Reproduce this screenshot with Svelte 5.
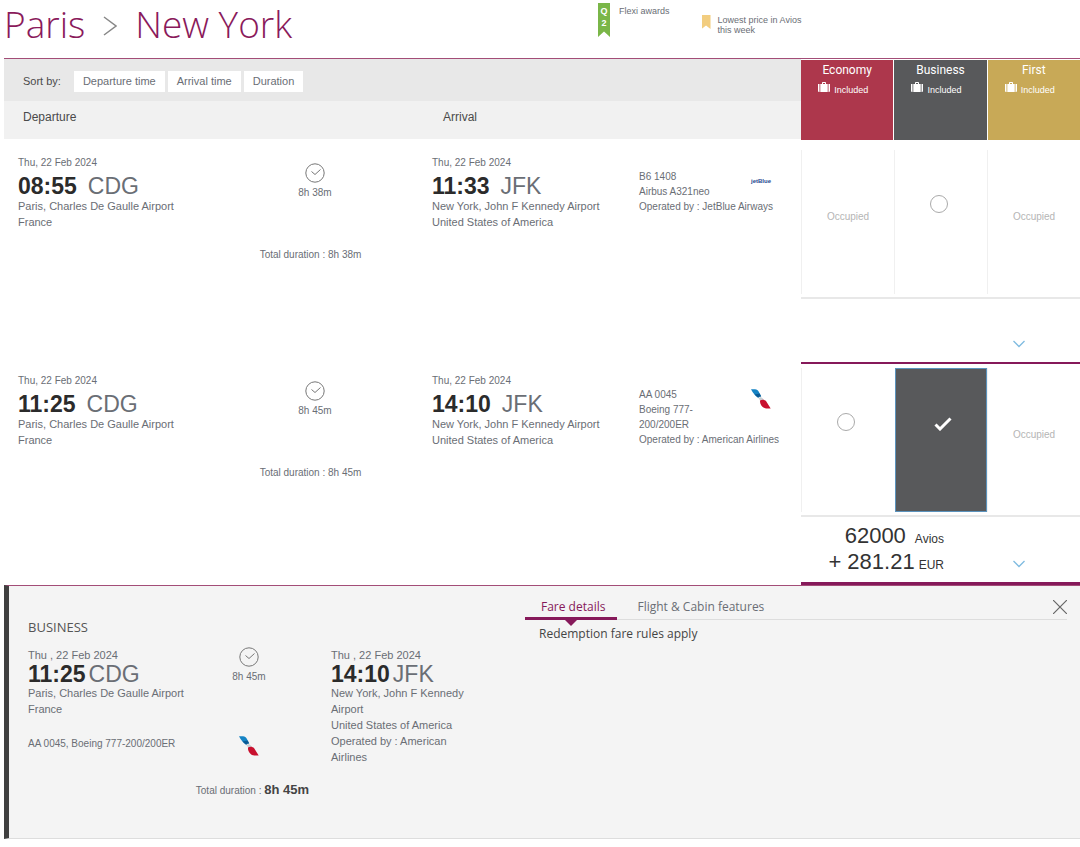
<script lang="ts">
  type Cabin = 'economy' | 'business' | 'first'

  type Flight = {
    id: string
    depart: string
    arrive: string
    duration: string
    number: string
    aircraft: string
    operator: string
    airline: 'jetblue' | 'american'
    open: Cabin[]
  }

  const cabins: { id: Cabin, label: string }[] = [
    { id: 'economy', label: 'Economy' },
    { id: 'business', label: 'Business' },
    { id: 'first', label: 'First' },
  ]

  const sorts = ['Departure time', 'Arrival time', 'Duration']
  const tabs = ['Fare details', 'Flight & Cabin features']

  const flights: Flight[] = [
    {
      id: 'b6-1408',
      depart: '08:55',
      arrive: '11:33',
      duration: '8h 38m',
      number: 'B6 1408',
      aircraft: 'Airbus A321neo',
      operator: 'JetBlue Airways',
      airline: 'jetblue',
      open: ['business'],
    },
    {
      id: 'aa-0045',
      depart: '11:25',
      arrive: '14:10',
      duration: '8h 45m',
      number: 'AA 0045',
      aircraft: 'Boeing 777-200/200ER',
      operator: 'American Airlines',
      airline: 'american',
      open: ['economy', 'business'],
    },
  ]

  let selected = $state('aa-0045/business')
  let activeTab = $state(0)
  let detailsOpen = $state(true)
</script>

{#snippet clock()}
  <svg class="clock" viewBox="0 0 20 20" width="20" height="20" aria-hidden="true">
    <circle cx="10" cy="10" r="9.200" />
    <path d="M6.500 8.500l3.500 3 5.500-5" />
  </svg>
{/snippet}

{#snippet american()}
  <svg viewBox="0 0 20 20" width="20" height="20" role="img" aria-label="American Airlines">
    <path fill="#1583c4" d="M0 .3h4c1.800 0 3 .9 3.800 2.500l2.400 4.700c-1.300-.4-2.400.2-3 1.300C4.300 7 2 4 0 .3z" />
    <path fill="#0b5a94" d="M3.500 5.600l5.200-1.100 1.500 3c-1.300-.4-2.400.2-3 1.300z" />
    <path fill="#c9ced2" d="M7.400 9c1-1.300 3.200-1.100 4.400.6l1 1.300-3.700.6z" />
    <path fill="#c8102e" d="M9 11.600c1.900-1.500 4.800-1.200 6 .5l4.700 7.400h-4.400c-3.200 0-6.700-3.700-6.300-7.900z" />
  </svg>
{/snippet}

{#snippet chevron()}
  <svg viewBox="0 0 12 8" width="12" height="8" aria-hidden="true">
    <path d="M.5 1l5.500 5.500L11.500 1" fill="none" stroke="#7fbbe0" stroke-width="1.300" />
  </svg>
{/snippet}

<main>
  <header>
    <h1>Paris <svg class="arrow" viewBox="0 0 14 20" width="14" height="20" role="img" aria-label="to"><path d="M1 1l12 9L1 19" /></svg> New York</h1>
    <div class="legend">
      <div class="flexi">
        <span class="ribbon"><b>Q</b><b>2</b></span>
        <span>Flexi awards</span>
      </div>
      <div class="lowest">
        <span class="tag"></span>
        <span>Lowest price in Avios<br />this week</span>
      </div>
    </div>
  </header>

  <section class="heading">
    <div class="bars">
      <div class="sort">
        <span>Sort by:</span>
        <div class="sort-buttons">
          {#each sorts as sort}
            <button type="button">{sort}</button>
          {/each}
        </div>
      </div>
      <div class="labels">
        <span>Departure</span>
        <span>Arrival</span>
      </div>
    </div>
    <div class="cabin-heads">
      {#each cabins as cabin}
        <div class="cabin-head {cabin.id}">
          <strong>{cabin.label}</strong>
          <span>
            <svg viewBox="0 0 12 10" width="12" height="10" fill="#fff" aria-hidden="true">
              <path d="M0 2h1.500v8H1Q0 10 0 9zM10.500 2H12v7q0 1-1 1h-.5z" />
              <path d="M2.300 2H4V.8Q4 0 4.800 0h2.400Q8 0 8 .8V2h1.700v8H2.300zM5 1v1h2V1z" fill-rule="evenodd" />
            </svg>
            Included
          </span>
        </div>
      {/each}
    </div>
  </section>

  {#each flights as flight}
    {@const active = selected.startsWith(flight.id)}
    <article class="flight">
      <div class="journey">
        <div>
          <p class="date">Thu, 22 Feb 2024</p>
          <p class="time"><b>{flight.depart}</b><span>CDG</span></p>
          <p>Paris, Charles De Gaulle Airport</p>
          <p>France</p>
        </div>
        <div class="length">
          {@render clock()}
          <span>{flight.duration}</span>
          <span class="total">Total duration : {flight.duration}</span>
        </div>
        <div>
          <p class="date">Thu, 22 Feb 2024</p>
          <p class="time"><b>{flight.arrive}</b><span>JFK</span></p>
          <p>New York, John F Kennedy Airport</p>
          <p>United States of America</p>
        </div>
        <div class="plane">
          <div class="plane-top">
            <div>
              <p>{flight.number}</p>
              <p>{flight.aircraft}</p>
            </div>
            {#if flight.airline === 'jetblue'}
              <span class="jetblue">jetBlue</span>
            {:else}
              <div class="tail">{@render american()}</div>
            {/if}
          </div>
          <p>Operated by : {flight.operator}</p>
        </div>
      </div>

      <div class="fares" class:active>
        <div class="cells">
          {#each cabins as cabin}
            {@const value = `${flight.id}/${cabin.id}`}
            {#if flight.open.includes(cabin.id)}
              <label class="cell" class:chosen={selected === value}>
                <input type="radio" name="fare" {value} bind:group={selected} aria-label="{flight.number} {cabin.label}" />
                {#if selected === value}
                  <svg viewBox="0 0 18 14" width="18" height="14" aria-hidden="true">
                    <path d="M1.500 7.500l4.500 4.500L16.500 1.500" fill="none" stroke="#fff" stroke-width="3" />
                  </svg>
                {/if}
              </label>
            {:else}
              <div class="cell occupied">Occupied</div>
            {/if}
          {/each}
        </div>
        <div class="price">
          <div class="amount">
            {#if active}
              <p>62000 <small class="avios">Avios</small></p>
              <p>+ 281.21 <small>EUR</small></p>
            {/if}
          </div>
          <button type="button" class="more" aria-label="Show fare details" onclick={() => detailsOpen = true}>
            {@render chevron()}
          </button>
        </div>
      </div>
    </article>
  {/each}

  {#if detailsOpen}
    <section class="details">
      <div class="summary">
        <h2>BUSINESS</h2>
        <div class="trip">
          <div>
            <p>Thu , 22 Feb 2024</p>
            <p class="time"><b>11:25</b><span>CDG</span></p>
            <p>Paris, Charles De Gaulle Airport</p>
            <p>France</p>
            <p class="aircraft">AA 0045, Boeing 777-200/200ER</p>
          </div>
          <div class="length">
            {@render clock()}
            <span>8h 45m</span>
            <div class="logo">{@render american()}</div>
          </div>
          <div class="arrival">
            <p>Thu , 22 Feb 2024</p>
            <p class="time"><b>14:10</b><span>JFK</span></p>
            <p>New York, John F Kennedy Airport</p>
            <p>United States of America</p>
            <p>Operated by : American Airlines</p>
          </div>
          <p class="sum">Total duration : <b>8h 45m</b></p>
        </div>
      </div>

      <div class="info">
        <div class="tabs">
          <div class="tab-list" role="tablist">
            {#each tabs as tab, i}
              <button type="button" role="tab" aria-selected={activeTab === i} onclick={() => activeTab = i}>{tab}</button>
            {/each}
          </div>
          <button type="button" class="close" aria-label="Close" onclick={() => detailsOpen = false}>
            <svg viewBox="0 0 14 14" width="14" height="14" aria-hidden="true">
              <path d="M0 0l14 14M14 0L0 14" stroke="#666" stroke-width="1.200" />
            </svg>
          </button>
        </div>
        <p class="rules">Redemption fare rules apply</p>
      </div>
    </section>
  {/if}
</main>

<style>
  :global(body) {
    background: #fff;
  }

  main {
    padding-left: 4px;
    font-family: 'Liberation Sans', Arial, sans-serif;
    font-size: 11px;
    line-height: 16px;
    color: #6a6e75;
  }

  h1, h2, p {
    margin: 0;
    font-weight: normal;
  }

  button {
    padding: 0;
    border: 0;
    background: none;
    font: inherit;
    color: inherit;
    cursor: pointer;
  }

  svg {
    display: block;
  }

  header {
    display: grid;
    grid-template-columns: 594fr 482fr;
    height: 58px;
    border-bottom: 1px solid #a34d77;
  }

  h1 {
    display: flex;
    align-items: center;
    gap: 18px;
    height: 48px;
    font: 300 37px/48px 'Open Sans', sans-serif;
    color: #8a1a5b;
  }

  .arrow {
    margin-top: 4px;
    fill: none;
    stroke: #888;
    stroke-width: 1.5;
  }

  .legend {
    display: flex;
    gap: 32px;
    padding-top: 3px;
    font-size: 9px;
    line-height: 10px;
  }

  .flexi, .lowest {
    display: flex;
    align-items: flex-start;
  }

  .flexi {
    gap: 9px;
    line-height: 16px;
  }

  .lowest {
    gap: 7px;
    padding-top: 12px;
  }

  .ribbon {
    display: flex;
    flex-direction: column;
    align-items: center;
    width: 12px;
    height: 34px;
    padding-top: 2px;
    box-sizing: border-box;
    background: #7ab648;
    clip-path: polygon(0 0, 100% 0, 100% 100%, 50% 84%, 0 100%);
    color: #fff;
    line-height: 12px;
  }

  .tag {
    width: 9px;
    height: 14px;
    background: #f2cd7f;
    clip-path: polygon(0 0, 100% 0, 100% 100%, 50% 75%, 0 100%);
  }

  .heading, .flight {
    display: grid;
    grid-template-columns: minmax(0, 797fr) minmax(0, 279fr);
  }

  .heading {
    margin-bottom: 4px;
  }

  .sort {
    display: flex;
    align-items: center;
    gap: 13px;
    height: 42px;
    padding: 2px 0 0 19px;
    box-sizing: border-box;
    background: #e8e8e8;
    color: #4a4a4a;
  }

  .sort-buttons {
    display: flex;
    gap: 3px;
  }

  .sort button {
    height: 21px;
    padding: 0 9px;
    background: #fff;
    color: #6a6e75;
  }

  .labels {
    display: grid;
    grid-template-columns: 420fr 358fr;
    padding: 8px 0 14px 19px;
    background: #f1f1f1;
    font-size: 12px;
    color: #4a4a4a;
  }

  .cabin-heads {
    display: grid;
    grid-template-columns: repeat(3, 1fr);
    gap: 1px;
    padding-top: 1px;
  }

  .cabin-head {
    display: flex;
    flex-direction: column;
    align-items: center;
    height: 80px;
    color: #fff;
  }

  .cabin-head strong {
    font: 12px/20px Roboto, sans-serif;
  }

  .cabin-head span {
    display: flex;
    gap: 4px;
    padding: 2px 8px 0 0;
    font-size: 9px;
  }

  .economy {
    background: #ad374c;
  }

  .business {
    background: #58595b;
  }

  .first {
    background: #c8a957;
  }

  .journey {
    display: grid;
    grid-template-columns: 180fr 234fr 207fr 162fr;
    padding: 11px 0 0 14px;
  }

  .journey p {
    white-space: nowrap;
  }

  .date, .length {
    font-size: 10px;
  }

  .time {
    display: flex;
    gap: 11px;
    font-size: 23px;
    line-height: 24px;
  }

  .flight .time {
    margin-top: 3px;
  }

  .time b {
    color: #2b2b2b;
  }

  .length {
    display: flex;
    flex-direction: column;
    align-items: center;
  }

  .clock {
    margin-bottom: 2px;
    fill: none;
    stroke: #777;
  }

  .journey .length {
    padding-top: 8px;
  }

  .total {
    margin-top: 46px;
    padding-right: 9px;
  }

  .plane {
    padding-top: 14px;
    font-size: 10px;
    line-height: 15px;
  }

  .plane-top {
    display: grid;
    grid-template-columns: 80px 1fr;
    gap: 32px;
  }

  .plane-top p {
    white-space: normal;
  }

  .jetblue {
    font-size: 6px;
    font-weight: bold;
    line-height: 24px;
    color: #24488f;
  }

  .tail {
    padding-top: 2px;
  }

  .fares {
    border-top: 2px solid transparent;
  }

  .fares.active {
    border-top-color: #86195a;
    border-bottom: 3px solid #86195a;
  }

  .cells {
    display: grid;
    grid-template-columns: repeat(3, 1fr);
    padding: 4px 0 3px;
    border-bottom: 2px solid #e8e8e8;
  }

  .cell {
    display: flex;
    justify-content: center;
    align-items: flex-start;
    height: 144px;
    padding-top: 45px;
    border-left: 1px solid #f0f0f0;
    box-sizing: border-box;
  }

  .cell input {
    appearance: none;
    width: 18px;
    height: 18px;
    margin: 0 4px 0 0;
    border: 1px solid #aaa;
    border-radius: 50%;
  }

  .cell.chosen {
    margin-left: 1px;
    padding: 48px 0 0 3px;
    border: 1px solid #5b93bd;
    background: #58595b;
  }

  .chosen input {
    width: 0;
    margin: 0;
    border: 0;
  }

  .cell.occupied {
    padding-top: 59px;
    font-size: 10px;
    color: #b5b5b5;
  }

  .price {
    display: grid;
    grid-template-columns: 186fr 93fr;
    min-height: 63px;
  }

  .amount {
    padding: 6px 43px 7px 0;
    color: #333;
  }

  .amount p {
    display: flex;
    justify-content: flex-end;
    align-items: baseline;
    gap: 4px;
    font-size: 22px;
    line-height: 26px;
  }

  small {
    font-size: 12px;
    line-height: 16px;
  }

  .avios {
    margin-left: 5px;
  }

  .more {
    align-self: end;
    justify-self: start;
    margin: 0 0 14px 26px;
  }

  .details {
    display: grid;
    grid-template-columns: 516fr 555fr;
    border-top: 1px solid #a34d77;
    border-bottom: 1px solid #ddd;
    border-left: 5px solid #404040;
    background: #f4f4f4;
  }

  .summary {
    padding: 31px 0 39px 19px;
  }

  h2 {
    margin-bottom: 10px;
    font: 13px/20px 'Open Sans', sans-serif;
    color: #555;
  }

  .trip {
    display: grid;
    grid-template-columns: 172fr 131fr 194fr;
  }

  .trip .time {
    gap: 3px;
    line-height: 22px;
  }

  .aircraft {
    margin-top: 19px;
    font-size: 10px;
  }

  .trip .length {
    padding-right: 33px;
  }

  .logo {
    margin-top: 51px;
  }

  .arrival {
    padding-right: 50px;
  }

  .sum {
    grid-column: 1 / 3;
    margin-top: 17px;
    padding-right: 22px;
    text-align: right;
    font-size: 10px;
  }

  .sum b {
    font-size: 13px;
    color: #444;
  }

  .info {
    padding: 10px 13px 0 0;
    font: 12px/20px 'Open Sans', sans-serif;
  }

  .tabs {
    display: flex;
    justify-content: space-between;
    align-items: flex-start;
    border-bottom: 1px solid #ddd;
  }

  .tab-list {
    display: flex;
    gap: 4px;
  }

  .tab-list button {
    height: 24px;
    margin-bottom: -1px;
    padding: 0 12px 0 16px;
    border-bottom: 3px solid transparent;
    line-height: 20px;
  }

  .tab-list button[aria-selected='true'] {
    position: relative;
    border-color: #86195a;
    color: #86195a;
  }

  .tab-list button[aria-selected='true']::after {
    content: '';
    position: absolute;
    top: 100%;
    left: 50%;
    margin: 2px 0 0 -7px;
    border: 7px solid transparent;
    border-top-color: #86195a;
    border-bottom: 0;
  }

  .close {
    padding-top: 4px;
  }

  .rules {
    padding: 4px 14px;
    color: #444;
  }
</style>
